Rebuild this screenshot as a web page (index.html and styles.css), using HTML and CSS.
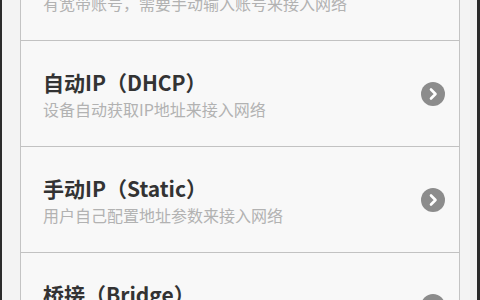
FILE: index.html
```html
<!DOCTYPE html>
<html lang="zh-CN">
<head>
<meta charset="utf-8">
<link rel="stylesheet" href="styles.css">
</head>
<body>
<div class="frame">
  <div class="list">
    <div class="card">
      <div class="text">
        <div class="title">宽带账号（PPPoE）</div>
        <div class="sub">有宽带账号，需要手动输入账号来接入网络</div>
      </div>
      <svg class="chev" viewBox="0 0 24 24"><circle cx="12" cy="12" r="12"/><path d="M10 7.5 L14.5 12 L10 16.5"/></svg>
    </div>
    <div class="card">
      <div class="text">
        <div class="title">自动IP（DHCP）</div>
        <div class="sub">设备自动获取IP地址来接入网络</div>
      </div>
      <svg class="chev" viewBox="0 0 24 24"><circle cx="12" cy="12" r="12"/><path d="M10 7.5 L14.5 12 L10 16.5"/></svg>
    </div>
    <div class="card">
      <div class="text">
        <div class="title">手动IP（Static）</div>
        <div class="sub">用户自己配置地址参数来接入网络</div>
      </div>
      <svg class="chev" viewBox="0 0 24 24"><circle cx="12" cy="12" r="12"/><path d="M10 7.5 L14.5 12 L10 16.5"/></svg>
    </div>
    <div class="card">
      <div class="text">
        <div class="title">桥接（Bridge）</div>
        <div class="sub">将设备作为交换机使用来接入网络</div>
      </div>
      <svg class="chev" viewBox="0 0 24 24"><circle cx="12" cy="12" r="12"/><path d="M10 7.5 L14.5 12 L10 16.5"/></svg>
    </div>
  </div>
</div>
</body>
</html>
```
FILE: styles.css
```css
html, body {
  margin: 0;
  padding: 0;
  height: 100%;
  overflow: hidden;
}
body {
  background: #2b2b2b;
  font-family: "Noto Sans CJK SC", "Noto Sans", sans-serif;
}
.frame {
  margin: 0 3px 0 2px;
  height: 100%;
  background: #f3f3f3;
  padding: 0 17px 0 18px;
  overflow: hidden;
}
.list {
  margin-top: -65px;
}
.card {
  height: 105px;
  box-sizing: content-box;
  background: #f8f8f8;
  border-left: 1px solid #c4c4c4;
  border-right: 1px solid #c4c4c4;
  border-bottom: 1px solid #c2c2c2;
  box-shadow: 0 1px 0 #e2e2e2;
  display: flex;
  align-items: center;
  padding: 0 14px 0 22px;
}
.text {
  flex: 1;
  display: flex;
  flex-direction: column;
  gap: 4px;
}
.title {
  font-size: 21px;
  line-height: 26px;
  font-weight: 700;
  color: #333333;
}
.sub {
  font-size: 16px;
  line-height: 20px;
  color: #b2b2b2;
}
.chev {
  width: 24px;
  height: 24px;
  flex: none;
}
.chev circle {
  fill: #8c8c8c;
}
.chev path {
  fill: none;
  stroke: #ffffff;
  stroke-width: 2.6;
  stroke-linecap: round;
  stroke-linejoin: round;
}
```
